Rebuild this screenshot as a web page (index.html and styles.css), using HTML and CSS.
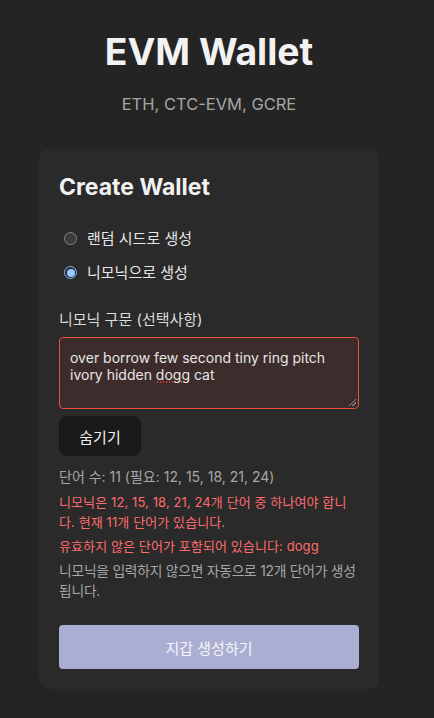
FILE: index.html
```html
<!DOCTYPE html>
<html lang="ko">
<head>
<meta charset="utf-8">
<link rel="stylesheet" href="styles.css">
</head>
<body>
<div class="app">
  <header class="header">
    <h1 class="title">EVM Wallet</h1>
    <p class="subtitle">ETH, CTC-EVM, GCRE</p>
  </header>
  <section class="card">
    <h2 class="card-title">Create Wallet</h2>
    <div class="options">
      <label class="option"><span class="radio"></span><span>랜덤 시드로 생성</span></label>
      <label class="option"><span class="radio checked"></span><span>니모닉으로 생성</span></label>
    </div>
    <div class="field-label">니모닉 구문 (선택사항)</div>
    <div class="textarea"><span>over borrow few second tiny ring pitch</span> <span>ivory hidden</span> <span class="misspelled">dogg</span> <span>cat</span><span class="grip"></span></div>
    <button class="btn-dark">숨기기</button>
    <p class="count">단어 수: 11 (필요: 12, 15, 18, 21, 24)</p>
    <p class="error">니모닉은 12, 15, 18, 21, 24개 단어 중 하나여야 합니다. 현재 11개 단어가 있습니다.</p>
    <p class="error">유효하지 않은 단어가 포함되어 있습니다: dogg</p>
    <p class="hint">니모닉을 입력하지 않으면 자동으로 12개 단어가 생성됩니다.</p>
    <button class="btn-primary">지갑 생성하기</button>
  </section>
</div>
</body>
</html>
```
FILE: styles.css
```css
* { box-sizing: border-box; }
html, body { margin: 0; padding: 0; }
body {
  background: #242424;
  color: rgba(255,255,255,0.87);
  font-family: Inter, "Noto Sans CJK KR", sans-serif;
  min-height: 718px;
}
.app {
  width: 418px;
  display: flex;
  flex-direction: column;
  align-items: center;
  padding-top: 28px;
}
.header { text-align: center; }
.title {
  margin: 0;
  font-size: 37.3px;
  font-weight: 700;
  line-height: 48px;
  color: #f2f2f2;
}
.subtitle {
  margin: 17px 0 0;
  font-size: 16.5px;
  line-height: 22px;
  color: #a6a6a6;
}
.card {
  margin-top: 34px;
  width: 340px;
  background: #2a2a2a;
  border-radius: 10px;
  padding: 24px 20px 20px;
  display: flex;
  flex-direction: column;
  align-items: flex-start;
}
.card-title {
  margin: 0;
  font-size: 23px;
  font-weight: 700;
  line-height: 28px;
  color: #f2f2f2;
}
.options {
  margin-top: 27px;
  display: flex;
  flex-direction: column;
  gap: 13px;
  padding-left: 5px;
}
.option {
  display: flex;
  align-items: center;
  gap: 10px;
  font-size: 15px;
  line-height: 21px;
  color: #e6e6e6;
}
.radio {
  width: 13px;
  height: 13px;
  border-radius: 50%;
  border: 1px solid #858585;
  background: #3b3b3b;
}
.radio.checked {
  border: 1px solid #7fb5ff;
  background: #2a2a2a;
  position: relative;
}
.radio.checked::after {
  content: "";
  position: absolute;
  left: 1.5px; top: 1.5px;
  width: 8px; height: 8px;
  border-radius: 50%;
  background: #99c8ff;
}
.field-label {
  margin-top: 26px;
  font-size: 15px;
  line-height: 22px;
  color: #dcdcdc;
}
.textarea {
  margin-top: 6px;
  width: 300px;
  height: 72px;
  background: #3d2c2c;
  border: 1px solid #e8503d;
  border-radius: 4px;
  padding: 11px 10px;
  font-size: 14px;
  line-height: 17px;
  color: #e6e6e6;
  position: relative;
}
.misspelled {
  background-image: radial-gradient(circle, #e53935 45%, transparent 50%);
  background-size: 3px 2px;
  background-repeat: repeat-x;
  background-position: 0 100%;
}
.grip {
  position: absolute;
  right: 2px; bottom: 2px;
  width: 7px; height: 7px;
  background: linear-gradient(135deg, transparent 45%, #888 45%, #888 55%, transparent 55%, transparent 70%, #888 70%, #888 80%, transparent 80%);
}
.btn-dark {
  margin-top: 7px;
  width: 82px;
  height: 40px;
  border: none;
  border-radius: 8px;
  background: #1a1a1a;
  color: #f0f0f0;
  font-family: inherit;
  font-size: 15px;
}
.count {
  margin: 11px 0 0;
  font-size: 14px;
  line-height: 20px;
  color: #a6a6a6;
}
.error {
  margin: 5px 0 0;
  font-size: 13px;
  letter-spacing: 0.1px;
  line-height: 20px;
  color: #ff6b6b;
}
.error + .error { margin-top: 4px; }
.hint {
  margin: 5px 0 0;
  font-size: 13.8px;
  letter-spacing: -0.25px;
  line-height: 20px;
  color: #a6a6a6;
}
.btn-primary {
  margin-top: 24px;
  width: 300px;
  height: 44px;
  border: none;
  border-radius: 4px;
  background: #abaed3;
  color: #f5f5f7;
  font-family: inherit;
  font-size: 15px;
}
```
